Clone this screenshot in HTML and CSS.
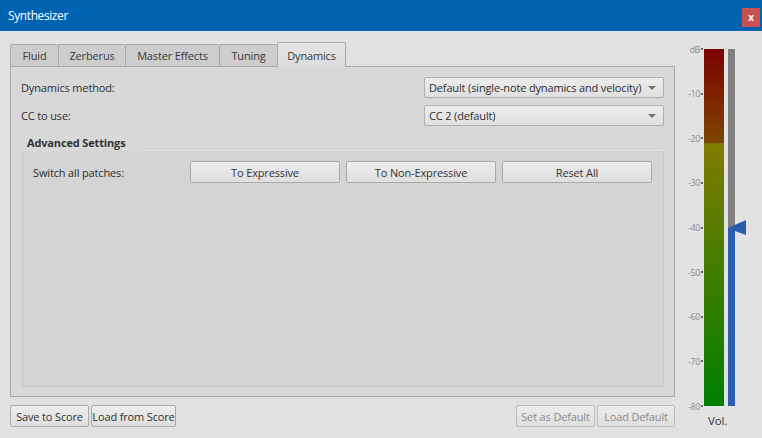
FILE: index.html
```html
<!DOCTYPE html>
<html>
<head>
<meta charset="utf-8">
<link rel="stylesheet" href="styles.css">
</head>
<body>
<div class="window">
  <div class="titlebar">
    <span class="title">Synthesizer</span>
    <span class="close">x</span>
  </div>
  <div class="main">
    <div class="left">
      <div class="tabs">
        <div class="tab w-fluid">Fluid</div>
        <div class="tab w-zerb">Zerberus</div>
        <div class="tab w-master">Master Effects</div>
        <div class="tab w-tuning">Tuning</div>
        <div class="tab active w-dyn">Dynamics</div>
      </div>
      <div class="pane">
        <div class="row">
          <span class="label">Dynamics method:</span>
          <div class="combo"><span>Default (single-note dynamics and velocity)</span><span class="arrow"></span></div>
        </div>
        <div class="row row2">
          <span class="label">CC to use:</span>
          <div class="combo"><span>CC 2 (default)</span><span class="arrow"></span></div>
        </div>
        <div class="group">
          <div class="group-head">
            <div class="group-title">Advanced Settings</div>
            <div class="group-fill"></div>
          </div>
          <div class="group-frame">
            <div class="patch-row">
              <span class="label patch-label">Switch all patches:</span>
              <div class="btn wide">To Expressive</div>
              <div class="btn wide">To Non-Expressive</div>
              <div class="btn wide">Reset All</div>
            </div>
          </div>
        </div>
      </div>
      <div class="footer">
        <div class="btn b-save">Save to Score</div>
        <div class="btn b-load">Load from Score</div>
        <div class="spacer"></div>
        <div class="btn disabled b-set">Set as Default</div>
        <div class="btn disabled b-ld">Load Default</div>
      </div>
    </div>
    <div class="meter">
      <div class="meter-body">
        <div class="scale">
          <div class="mark"><span>dB</span><i></i></div>
          <div class="mark"><span>-10</span><i></i></div>
          <div class="mark"><span>-20</span><i></i></div>
          <div class="mark"><span>-30</span><i></i></div>
          <div class="mark"><span>-40</span><i></i></div>
          <div class="mark"><span>-50</span><i></i></div>
          <div class="mark"><span>-60</span><i></i></div>
          <div class="mark"><span>-70</span><i></i></div>
          <div class="mark"><span>-80</span><i></i></div>
        </div>
        <div class="level">
          <div class="level-red"></div>
          <div class="level-green"></div>
        </div>
        <div class="vol">
          <div class="vol-off"></div>
          <div class="vol-on"></div>
          <svg class="handle" width="19" height="16" viewBox="0 0 19 16"><polygon points="0,8 18,0 18,15 7,11 7,16 0,16" fill="#2a5db0"/></svg>
        </div>
      </div>
      <div class="vol-label">Vol.</div>
    </div>
  </div>
</div>
</body>
</html>
```

FILE: styles.css
```css
html, body {
  margin: 0;
  padding: 0;
}
body {
  width: 762px;
  height: 438px;
  overflow: hidden;
  background: #e1e1e1;
  font-family: "Open Sans", "Liberation Sans", sans-serif;
  font-size: 11px;
  letter-spacing: -0.15px;
  color: #2e2e2e;
}
.window {
  width: 762px;
  height: 438px;
  background: #e2e2e2;
  border-bottom-right-radius: 6px;
  overflow: hidden;
}
.titlebar {
  height: 31px;
  background: #0063b1;
  display: flex;
  align-items: flex-start;
}
.title {
  color: #ffffff;
  font-size: 12px;
  letter-spacing: -0.4px;
  margin-left: 8px;
  line-height: 31px;
}
.close {
  margin-left: auto;
  margin-top: 8px;
  margin-right: 2px;
  width: 18px;
  height: 19px;
  background: #c75050;
  color: #fff;
  font-weight: bold;
  font-size: 10px;
  line-height: 18px;
  text-align: center;
}
.main {
  display: flex;
  padding: 11px 0 0 10px;
}
.left {
  width: 665px;
  display: flex;
  flex-direction: column;
}
.tabs {
  display: flex;
  height: 24px;
  align-items: flex-end;
}
.tab {
  height: 22px;
  box-sizing: border-box;
  border: 1px solid #aaaaaa;
  border-bottom: none;
  border-right: none;
  background: #cdcdcd;
  display: flex;
  align-items: center;
  justify-content: center;
  color: #3a3a3a;
  border-radius: 2px 2px 0 0;
}
.tab.active {
  border-right: 1px solid #aaaaaa;
  background: linear-gradient(#e4e4e4, #dcdcdc);
  margin-bottom: -1px;
  height: 25px;
  position: relative;
  z-index: 1;
}
.w-fluid { width: 48px; }
.w-zerb { width: 67px; }
.w-master { width: 94px; }
.w-tuning { width: 58px; }
.w-dyn { width: 69px; }
.pane {
  height: 331px;
  box-sizing: border-box;
  border: 1px solid #a9a9a9;
  background: #d8d8d8;
  padding: 10px 10px 0 10px;
}
.row {
  display: flex;
  align-items: center;
  height: 21px;
}
.row2 {
  margin-top: 7px;
}
.label {
  flex: 1;
}
.combo {
  width: 240px;
  height: 21px;
  box-sizing: border-box;
  border: 1px solid #afafaf;
  border-radius: 2px;
  background: linear-gradient(#ececec, #e0e0e0);
  display: flex;
  align-items: center;
  padding-left: 4px;
  padding-right: 7px;
  white-space: nowrap;
}
.combo span:first-child {
  flex: 1;
}
.arrow {
  width: 0;
  height: 0;
  border-left: 4px solid transparent;
  border-right: 4px solid transparent;
  border-top: 4px solid #707070;
}
.group {
  margin: 10px 0 0 1px;
}
.group-head {
  display: flex;
  height: 15px;
}
.group-title {
  width: 117px;
  font-weight: bold;
  padding-left: 5px;
  box-sizing: border-box;
  line-height: 14px;
  color: #333;
  white-space: nowrap;
}
.group-fill {
  flex: 1;
  border-bottom: 1px solid #e1e1e1;
}
.group-frame {
  height: 236px;
  box-sizing: border-box;
  border: 1px solid #c6c6c6;
  border-top: none;
  background: #d4d4d4;
  padding: 10px 11px 0 10px;
}
.patch-row {
  display: flex;
  align-items: center;
  gap: 6px;
}
.patch-label {
  flex: none;
  width: 151px;
}
.btn {
  height: 22px;
  box-sizing: border-box;
  border: 1px solid #aaaaaa;
  border-radius: 2px;
  background: linear-gradient(#ededed, #dedede);
  display: flex;
  align-items: center;
  justify-content: center;
  color: #333;
  white-space: nowrap;
}
.btn.wide {
  width: 150px;
}
.btn.disabled {
  color: #8c8c8c;
  border-color: #bdbdbd;
}
.footer {
  display: flex;
  margin-top: 8px;
  gap: 2px;
}
.spacer { flex: 1; }
.b-save { width: 79px; }
.b-load { width: 85px; }
.b-set { width: 79px; }
.b-ld { width: 78px; }
.meter {
  margin-left: 3px;
  display: flex;
  flex-direction: column;
  padding-top: 7px;
}
.meter-body {
  display: flex;
  height: 357px;
}
.scale {
  width: 26px;
  display: flex;
  flex-direction: column;
  justify-content: space-between;
}
.mark {
  height: 0;
  display: flex;
  align-items: center;
  justify-content: flex-end;
  font-size: 9px;
  color: #8c8c8c;
}
.mark span {
  letter-spacing: -0.4px;
}
.mark i {
  display: block;
  width: 2px;
  height: 2px;
  background: #6a6a6a;
  margin-left: 1px;
  margin-right: 1px;
}
.level {
  width: 20px;
  display: flex;
  flex-direction: column;
}
.level-red {
  height: 94px;
  background: linear-gradient(#7d0000, #7b4600);
}
.level-green {
  flex: 1;
  background: linear-gradient(#807b00, #007f00);
}
.vol {
  width: 7px;
  margin-left: 4px;
  display: flex;
  flex-direction: column;
  position: relative;
}
.vol-off {
  height: 179px;
  background: #808080;
}
.vol-on {
  flex: 1;
  background: #2a5db0;
}
.handle {
  position: absolute;
  left: 0;
  top: 171px;
}
.vol-label {
  margin-left: 30px;
  margin-top: 7px;
  font-size: 11.5px;
  color: #333;
}
```
